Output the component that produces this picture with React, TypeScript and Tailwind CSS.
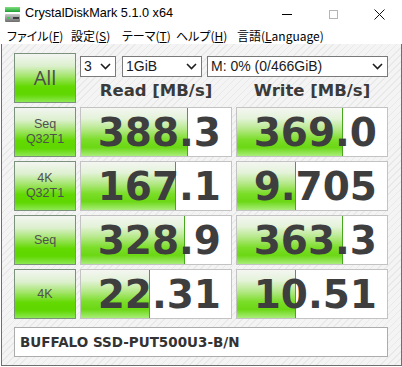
import { ReactNode } from 'react'

type Row = { label: ReactNode; read: string; write: string; readFill: number; writeFill: number }

// fill widths are px out of 150 (inner width of a value box)
const rows: Row[] = [
  { label: <><div>Seq</div><div>Q32T1</div></>, read: '388.3', write: '369.0', readFill: 107, writeFill: 106 },
  { label: <><div>4K</div><div>Q32T1</div></>, read: '167.1', write: '9.705', readFill: 95, writeFill: 59 },
  { label: 'Seq', read: '328.9', write: '363.3', readFill: 104, writeFill: 106 },
  { label: '4K', read: '22.31', write: '10.51', readFill: 69, writeFill: 59 },
]

const labelBg =
  'bg-[linear-gradient(180deg,#f3f6f1_0%,#dcf0cd_25%,#9ee463_48%,#62d900_68%,#5fd700_84%,#8de852_100%)]'

function AppIcon() {
  return (
    <svg width="17" height="17" viewBox="0 0 17 17">
      <defs>
        <linearGradient id="g1" x1="0" y1="0" x2="0" y2="1">
          <stop offset="0" stopColor="#7fe07f" />
          <stop offset="1" stopColor="#1f9e32" />
        </linearGradient>
        <linearGradient id="g2" x1="0" y1="0" x2="0" y2="1">
          <stop offset="0" stopColor="#c9c9c9" />
          <stop offset="1" stopColor="#6d6d6d" />
        </linearGradient>
      </defs>
      <rect x="1" y="1" width="15" height="5" fill="url(#g1)" />
      <rect x="1" y="8" width="15" height="8" rx="1" fill="url(#g2)" />
      <rect x="9" y="11" width="6" height="2" fill="#3b3b3b" />
      <rect x="3" y="11" width="3" height="2" fill="#2fd04a" />
    </svg>
  )
}

function Chevron() {
  return (
    <svg width="11" height="7" viewBox="0 0 11 7">
      <path d="M1 1 L5.5 5.5 L10 1" fill="none" stroke="#1e1e1e" strokeWidth="1.6" />
    </svg>
  )
}

function Select({ w, text }: { w: string; text: string }) {
  return (
    <div className={`${w} h-[21px] bg-white border border-[#7a7a7a] flex items-center justify-between pl-[3px] pr-[4px] text-[14px] text-[#1a1a1a] font-['Liberation_Sans',sans-serif]`}>
      <span>{text}</span>
      <Chevron />
    </div>
  )
}

function Value({ text, fill }: { text: string; fill: number }) {
  return (
    <div className="relative h-[50px] bg-white border border-[#c3c3c3] overflow-hidden">
      <div
        className="absolute left-0 top-0 bottom-0 border-r border-[#46a81c] bg-[linear-gradient(180deg,#f4f6f2_0%,#e4f3d9_22%,#b4e886_45%,#7bdd28_66%,#6bd814_82%,#a9ed7a_100%)]"
        style={{ width: fill }}
      />
      <div className="relative h-full flex items-center justify-end pr-[10px] font-['DejaVu_Sans',sans-serif] font-bold text-[39px] leading-none text-[#3e3e3e]">
        {text}
      </div>
    </div>
  )
}

export default function App() {
  return (
    <div className="w-[402px] h-[367px] bg-white overflow-hidden font-['Liberation_Sans',sans-serif]">
      {/* title bar */}
      <div className="h-[28px] flex items-center">
        <div className="pl-[4px] pr-[4px] flex items-center">
          <AppIcon />
        </div>
        <span className="text-[12.7px] text-black">CrystalDiskMark 5.1.0 x64</span>
        <div className="ml-auto flex h-full">
          <div className="w-[46px] flex items-center justify-center">
            <div className="w-[10px] h-px bg-black" />
          </div>
          <div className="w-[46px] flex items-center justify-center">
            <div className="w-[9px] h-[9px] border border-[#b5b5b5]" />
          </div>
          <div className="w-[46px] flex items-center justify-center">
            <svg width="11" height="11" viewBox="0 0 11 11">
              <path d="M0.5 0.5 L10.5 10.5 M10.5 0.5 L0.5 10.5" stroke="#111" strokeWidth="1" />
            </svg>
          </div>
        </div>
      </div>

      {/* menu bar */}
      <div className="h-[16px] flex items-center pl-[7px] text-[12px] leading-none text-black font-['Noto_Sans_CJK_JP',sans-serif] [font-feature-settings:'palt']">
        <span className="w-[64px]">ファイル(<span className="underline">F</span>)</span>
        <span className="w-[51px]">設定(<span className="underline">S</span>)</span>
        <span className="w-[54px]">テーマ(<span className="underline">T</span>)</span>
        <span className="w-[61px]">ヘルプ(<span className="underline">H</span>)</span>
        <span>言語(<span className="underline">L</span>anguage)</span>
      </div>

      {/* body */}
      <div className="ml-[1px] w-[401px] h-[322px] border-x border-b border-[#6f6f6f] bg-[repeating-linear-gradient(135deg,#f4f4f4_0px,#f4f4f4_4px,#e9e9e9_4px,#e9e9e9_5px)] pt-[9px] pl-[12px]">
        <div className="grid grid-cols-[62px_152px_152px] gap-[4px]">
          {/* top area */}
          <div className={`h-[50px] border border-[#7b917b] ${labelBg} flex items-center justify-center text-[20px] text-[#4d4d4d] font-['Open_Sans',sans-serif]`}>
            All
          </div>
          <div className="col-span-2 flex flex-col">
            <div className="flex mt-[3px]">
              <Select w="w-[36px]" text="3" />
              <div className="w-[6px]" />
              <Select w="w-[80px]" text="1GiB" />
              <div className="w-[5px]" />
              <Select w="w-[181px]" text="M: 0% (0/466GiB)" />
            </div>
            <div className="grid grid-cols-2 gap-[4px] flex-1 items-center font-['DejaVu_Sans',sans-serif] font-bold text-[16.5px] text-[#3a3a3a] leading-none pt-[2px]">
              <div className="text-center">Read [MB/s]</div>
              <div className="text-center">Write [MB/s]</div>
            </div>
          </div>

          {rows.map((r, i) => (
            <div key={i} className="contents">
              <div className={`h-[50px] border border-[#7b917b] ${labelBg} flex flex-col items-center justify-center text-center text-[12.5px] leading-[15px] text-[#505050] font-['Liberation_Sans',sans-serif]`}>
                {r.label}
              </div>
              <Value text={r.read} fill={r.readFill} />
              <Value text={r.write} fill={r.writeFill} />
            </div>
          ))}
        </div>

        <div className="mt-[8px] w-[374px] h-[30px] bg-white border border-[#acacac] flex items-center pl-[5px] font-['DejaVu_Sans',sans-serif] font-bold text-[13.5px] text-[#333]">
          BUFFALO SSD-PUT500U3-B/N
        </div>
      </div>
    </div>
  )
}
